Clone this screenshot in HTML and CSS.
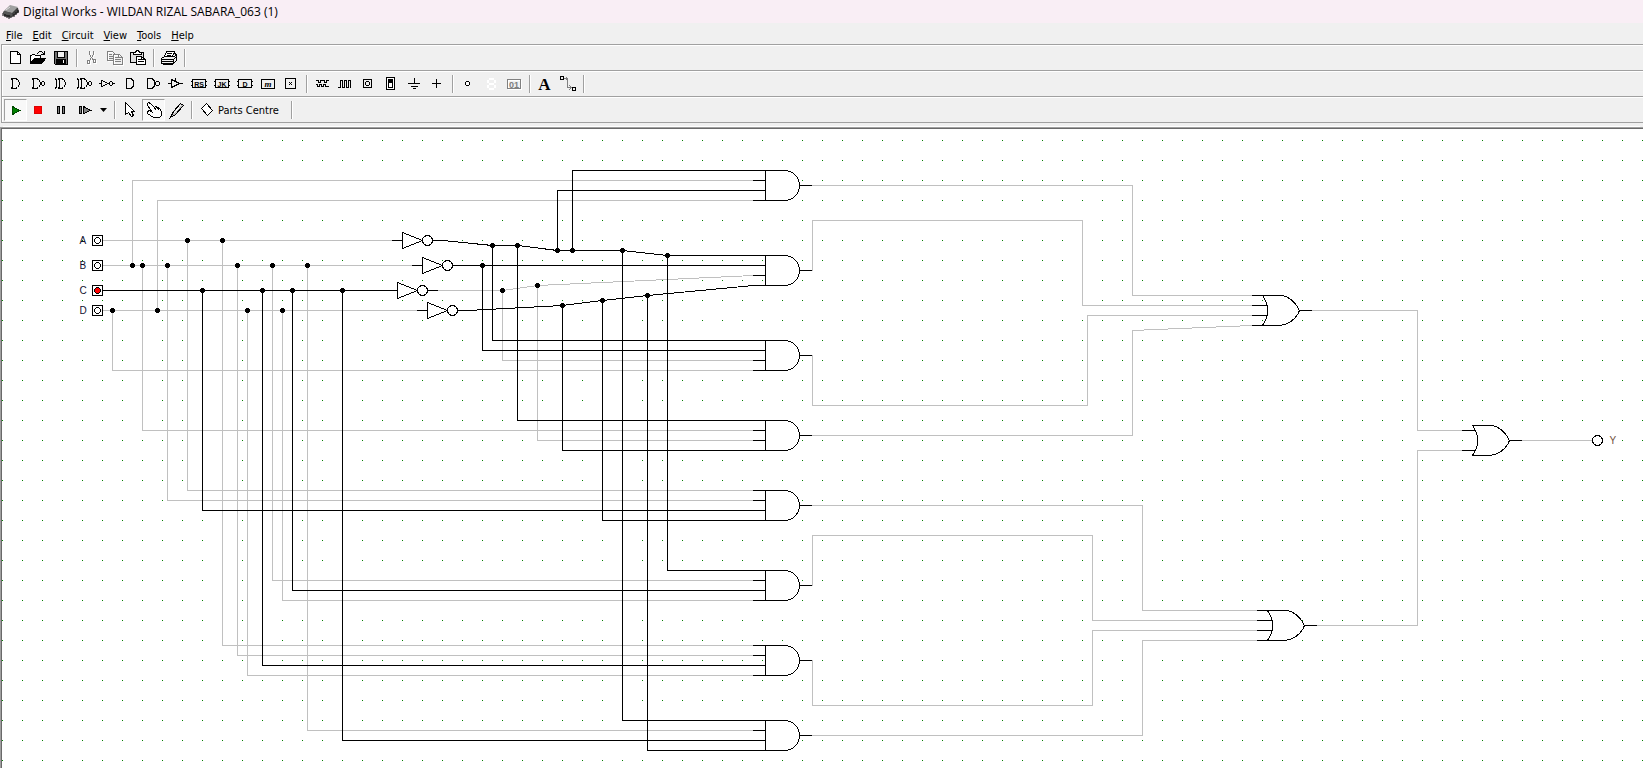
FILE: index.html
```html
<!DOCTYPE html>
<html lang="en">
<head>
<meta charset="utf-8">
<title>Digital Works</title>
<link rel="stylesheet" href="styles.css">
</head>
<body class="window">
<header class="titlebar">
  <svg class="app-icon" width="18" height="16" viewBox="0 0 18 16" aria-hidden="true">
    <path d="M1 8L8 2L16 4L17 8L9 14L2 12Z" fill="#404040"/>
    <path d="M2 7L8 1L16 3L10 9Z" fill="#a0a0a0"/>
    <path d="M2 7L10 9L10 12L2 10Z" fill="#555"/>
    <path d="M1 9v3M3 10v3M5 11v3M7 11v4M12 10v3M14 8v3M16 6v3" stroke="#111" fill="none"/>
    <path d="M4 6L8 3" stroke="#ddd"/>
  </svg>
  <h1 class="title">Digital Works - WILDAN RIZAL SABARA_063 (1)</h1>
</header>
<nav class="menubar" aria-label="Main menu">
  <button class="menu"><u>F</u>ile</button>
  <button class="menu"><u>E</u>dit</button>
  <button class="menu"><u>C</u>ircuit</button>
  <button class="menu"><u>V</u>iew</button>
  <button class="menu"><u>T</u>ools</button>
  <button class="menu"><u>H</u>elp</button>
</nav>
<div class="toolbars">
  <div class="toolbar" role="toolbar" aria-label="Standard">
    <button class="tool" aria-label="New"><svg class="icon" viewBox="-0.5 -0.5 21 20"><path class="w" d="M5 3H12L15 6V15H5Z"/><path d="M12 3V6H15"/></svg></button>
    <button class="tool" aria-label="Open"><svg class="icon" viewBox="-0.5 -0.5 21 20"><path class="w" d="M2 15V7H3L4 6H6L7 7H12V10"/><path class="k" d="M2 15L6 10H17L13 15Z"/><path d="M9 5L11 3H13L16 6M16 3V6H13"/></svg></button>
    <button class="tool" aria-label="Save"><svg class="icon" viewBox="-0.5 -0.5 21 20"><path d="M3 3H16V16H4L3 15Z" fill="#707070"/><path class="k" d="M5 11H14V16H5Z"/><path fill="#f0f0f0" d="M6 3H13V9H6Z"/><path class="white" d="M12 12V14"/></svg></button>
    <span class="sep"></span>
    <button class="tool" aria-label="Cut"><svg class="icon" viewBox="-0.5 -0.5 21 20"><g class="white" transform="translate(1 1)"><path d="M7 3V6L11 12M11 3V6L7 12M5 12H7V15H5ZM11 11H13V14H11Z"/></g><path class="gray" d="M7 3V6L11 12M11 3V6L7 12M5 12H7V15H5ZM11 11H13V14H11Z"/></svg></button>
    <button class="tool" aria-label="Copy"><svg class="icon" viewBox="-0.5 -0.5 21 20"><g class="white" transform="translate(1 1)"><path d="M8 12H2V3H7L9 5M8 16V6H14L17 9V16Z"/></g><path class="gray" d="M8 12H2V3H7L9 5M4 6H6M4 8H7M4 10H7M8 16V6H14L17 9V16ZM13 6V9H17M10 9H12M10 11H15M10 13H15"/></svg></button>
    <button class="tool" aria-label="Paste"><svg class="icon" viewBox="-0.5 -0.5 21 20"><path d="M3 4H15V14H2V4Z" fill="#ddd"/><path class="w" d="M5 6V4H7L8 2H10L11 4H13V6Z"/><path class="w" d="M8 16V8H13L17 11V16Z"/><path d="M13 8V11H17M10 11H12M10 13H15"/></svg></button>
    <span class="sep"></span>
    <button class="tool" aria-label="Print"><svg class="icon" viewBox="-0.5 -0.5 21 20"><path class="w" d="M5 8L7 3H15L13 8"/><path d="M8 5H12M8 7H11"/><path fill="#eee" d="M2 10L5 8H15L17 6V12L14 15H2Z"/><path d="M2 11H14L17 8M14 11V15M3 13H13M4 15V16H13L17 12M15 5L17 6"/></svg></button>
    <span class="sep"></span>
  </div>
  <div class="toolbar" role="toolbar" aria-label="Gates and parts">
    <button class="tool" aria-label="OR gate"><svg class="icon" viewBox="-0.5 -0.5 21 20"><path d="M6 4H10L12 5L14 8V10L12 13L10 14H6L7 12V6Z"/></svg></button>
    <button class="tool" aria-label="NOR gate"><svg class="icon" viewBox="-0.5 -0.5 21 20"><path d="M4 4H8L10 5L12 8V10L10 13L8 14H4L5 12V6ZM13 8L14 7H15L16 8V10L15 11H14L13 10Z"/></svg></button>
    <button class="tool" aria-label="XOR gate"><svg class="icon" viewBox="-0.5 -0.5 21 20"><path d="M7 4H10L12 5L14 8V10L12 13L10 14H7L8 12V6ZM4 4L5 6V12L4 14"/></svg></button>
    <button class="tool" aria-label="XNOR gate"><svg class="icon" viewBox="-0.5 -0.5 21 20"><path d="M6 4H9L11 5L13 8V10L11 13L9 14H6L7 12V6ZM3 4L4 6V12L3 14M14 8L15 7H16L17 8V10L16 11H15L14 10Z"/></svg></button>
    <button class="tool" aria-label="NOT gate"><svg class="icon" viewBox="-0.5 -0.5 21 20"><path d="M2 9H4M4 6V12L11 9ZM12 8L13 7H14L15 8V10L14 11H13L12 10ZM16 9H17"/></svg></button>
    <button class="tool" aria-label="AND gate"><svg class="icon" viewBox="-0.5 -0.5 21 20"><path d="M6 4H10L12 5L13 7V11L12 13L10 14H6Z"/></svg></button>
    <button class="tool" aria-label="NAND gate"><svg class="icon" viewBox="-0.5 -0.5 21 20"><path d="M4 4H8L10 5L11 7V11L10 13L8 14H4ZM12 8L13 7H15L16 8V10L15 11H13L12 10Z"/></svg></button>
    <button class="tool" aria-label="Tri-state buffer"><svg class="icon" viewBox="-0.5 -0.5 21 20"><path d="M2 9H5M5 5V13L13 9ZM13 9H16M9 4V7"/></svg></button>
    <button class="tool" aria-label="RS flip-flop"><svg class="icon" viewBox="-0.5 -0.5 21 20"><path d="M3 5H16V13H3ZM2 7H3M2 11H3M16 7H17M16 11H17"/><text x="9.5" y="12">RS</text></svg></button>
    <button class="tool" aria-label="JK flip-flop"><svg class="icon" viewBox="-0.5 -0.5 21 20"><path d="M3 5H16V13H3ZM2 7H3M2 11H3M16 7H17M16 11H17"/><text x="9.5" y="12">JK</text></svg></button>
    <button class="tool" aria-label="D flip-flop"><svg class="icon" viewBox="-0.5 -0.5 21 20"><path d="M3 5H16V13H3ZM2 7H3M2 11H3M16 7H17M16 11H17"/><text x="9.5" y="12">D</text></svg></button>
    <button class="tool" aria-label="Macro"><svg class="icon" viewBox="-0.5 -0.5 21 20"><path d="M3 5H16V14H3Z"/><text class="script" x="9.5" y="12">m</text></svg></button>
    <button class="tool" aria-label="Device"><svg class="icon" viewBox="-0.5 -0.5 21 20"><path d="M4 4H14V14H4Z"/><path class="k" stroke="none" d="M7.500 7.500h1v1h1v-1h1v1h-1v1h1v1h-1v-1h-1v1h-1v-1h1v-1h-1Z"/></svg></button>
    <span class="sep"></span>
    <button class="tool" aria-label="Sequence generator"><svg class="icon" viewBox="-0.5 -0.5 21 20"><path d="M4 6H6V8H8V6H12V8H14V6H16M4 10H5V12H7V10H9V12H11V10H13V12H16"/></svg></button>
    <button class="tool" aria-label="Clock"><svg class="icon" viewBox="-0.5 -0.5 21 20"><path d="M3 13H5V6H7V13H9V6H11V13H13V6H15V13"/></svg></button>
    <button class="tool" aria-label="Interactive input"><svg class="icon" viewBox="-0.5 -0.5 21 20"><path d="M5 5H13V13H5ZM8 7H10L11 8V10L10 11H8L7 10V8Z"/></svg></button>
    <button class="tool" aria-label="Switch"><svg class="icon" viewBox="-0.5 -0.5 21 20"><path class="w" d="M5 3H13V15H5Z"/><path class="k" d="M7 5H11V8H7Z"/><path d="M7 8V13H11V8"/></svg></button>
    <button class="tool" aria-label="Ground"><svg class="icon" viewBox="-0.5 -0.5 21 20"><path d="M10 4V9M4 9H15M7 12H13M9 14H11"/></svg></button>
    <button class="tool" aria-label="Supply"><svg class="icon" viewBox="-0.5 -0.5 21 20"><path d="M9 5V13M5 9H13"/></svg></button>
    <span class="sep"></span>
    <button class="tool" aria-label="Lamp"><svg class="icon" viewBox="-0.5 -0.5 21 20"><path class="w" d="M8 7H10L11 8V10L10 11H8L7 10V8Z"/></svg></button>
    <button class="tool" aria-label="Seven-segment display"><svg class="icon" viewBox="-0.5 -0.5 21 20"><path class="segments" d="M7 4H12M7 9H12M7 14H12M6 5V8M13 5V8M6 10V13M13 10V13"/></svg></button>
    <button class="tool" aria-label="Numeric output" disabled><svg class="icon" viewBox="-0.5 -0.5 21 20"><path class="white" d="M4 6H17V15H4Z"/><path class="gray" d="M3 5H16V14H3Z"/><text class="dim" x="9.5" y="13">01</text></svg></button>
    <span class="sep"></span>
    <button class="tool" aria-label="Text"><svg class="icon" viewBox="-0.5 -0.5 21 20"><text class="letter" x="9" y="15">A</text></svg></button>
    <button class="tool" aria-label="Wire"><svg class="icon" viewBox="-0.5 -0.5 21 20"><path class="gray" d="M6 4H9V13H13M8 3V5M11 11L13 13L11 15"/><path d="M2 2H5V5H2ZM14 13H17V16H14Z"/></svg></button>
    <span class="sep"></span>
  </div>
  <div class="toolbar" role="toolbar" aria-label="Simulation">
    <button class="tool pressed" aria-label="Run" aria-pressed="true"><svg class="icon" viewBox="-0.5 -0.5 21 20"><path d="M7 6L14 10L7 14Z" fill="#008000" stroke="#004800"/></svg></button>
    <button class="tool" aria-label="Stop"><svg class="icon" viewBox="-0.5 -0.5 21 20"><path d="M6 6H13V13H6Z" fill="#f00" stroke="#d00"/></svg></button>
    <button class="tool" aria-label="Pause"><svg class="icon" viewBox="-0.5 -0.5 21 20"><path d="M6 6H8V13H6ZM11 6H13V13H11Z" fill="#808080"/></svg></button>
    <button class="tool" aria-label="Step"><svg class="icon" viewBox="-0.5 -0.5 21 20"><path d="M5 6H7V13H5ZM9 6L16 10L9 13Z" fill="#808080"/></svg></button>
    <button class="tool drop" aria-label="Step options"><svg class="icon-small" viewBox="0 0 13 20"><path d="M3 8H10L6.500 12Z" fill="#000"/></svg></button>
    <span class="sep"></span>
    <button class="tool" aria-label="Select"><svg class="icon" viewBox="-0.5 -0.5 21 20"><path class="w" d="M5 2L14 11H11L13 15L11 16L8 12L5 14Z"/></svg></button>
    <button class="tool pressed" aria-label="Interact" aria-pressed="true"><svg class="icon" viewBox="-0.5 -0.5 21 20"><path class="w" d="M4 3L5 2L7 3L11 7L12 6L14 7L15 7L17 9L18 12V15L16 17H10L4 13V11L6 10L9 12L4 5Z"/><path d="M11 7L12 9M14 7L15 9"/></svg></button>
    <button class="tool" aria-label="Probe"><svg class="icon" viewBox="-0.5 -0.5 21 20"><path d="M14 3L17 5L9 14L4 17L7 11Z" fill="#c0c0c0"/><path class="white" d="M14 5L8 12"/></svg></button>
    <span class="sep"></span>
    <button class="tool wide"><svg class="icon" viewBox="-0.5 -0.5 21 20"><path class="w" d="M4 8L9 3L15 10L10 15Z"/></svg><span>Parts Centre</span></button>
    <span class="sep"></span>
  </div>
</div>
<main class="workspace">
  <svg class="circuit" role="img" aria-label="Circuit diagram with inputs A, B, C, D and output Y">
    <defs>
      <pattern id="grid" width="20" height="20" patternUnits="userSpaceOnUse"><rect x="0" y="11" width="1" height="1" fill="#008000"/></pattern>
      <path id="dot" class="k" stroke="none" d="M-1.500-2.500H1.500V-1.500H2.500V1.500H1.500V2.500H-1.500V1.500H-2.500V-1.500H-1.500Z"/>
      <g id="and">
        <path class="w" d="M12 0H31A15 15 0 0 1 31 30H12Z"/>
        <path d="M0 0H12M0 10H12M0 20H12M0 30H12M46 15H58"/>
      </g>
      <g id="or-body">
        <path class="w" d="M10 0H28C36 0 44 8 47 15C44 23 36 30 25 30H10C17 20 17 10 10 0Z"/>
        <path d="M47 15H59"/>
      </g>
      <g id="or4"><use href="#or-body"/><path d="M0 0H10M0 10H14M0 20H14M0 30H10"/></g>
      <g id="or2"><use href="#or-body"/><path d="M0 5H12M0 25H12"/></g>
      <g id="not">
        <path class="w" d="M10-8V8L30 0Z"/>
        <circle class="w" cx="35" cy="0" r="5"/>
        <path d="M0 0H10M40 0H50"/>
      </g>
      <g id="input"><path class="w" d="M-5-5H5V5H-5Z"/><path d="M-1-3H1L3-1V1L1 3H-1L-3 1V-1Z"/></g>
    </defs>
    <rect width="100%" height="100%" fill="url(#grid)"/>
    <g class="drawing" transform="translate(-1.500 -128.500)">
      <g class="low">
        <path d="M103 240H392M103 265H412M103 310H417"/>
        <path d="M132 265V180H753M157 310V200H753"/>
        <path d="M112 310V370H753M142 265V430H753M187 240V490H753M167 265V500H753"/>
        <path d="M272 265V580H753M282 310V600H753M222 240V645H753M237 265V655H753M247 310V675H753M307 265V730H753"/>
        <path d="M437 290H502L537 285L753 275M502 290V360H753M537 285V440H753"/>
        <path d="M812 185H1132V295H1252M812 270V220H1082V305H1252M812 355V405H1087V315H1252M812 435H1132V330L1252 325"/>
        <path d="M812 505H1142V610H1257M812 585V535H1092V620H1257M812 660V705H1092V630H1257M812 735H1142V640H1257"/>
        <path d="M1312 310H1417V430H1462M1317 625H1417V450H1462M1522 440H1592"/>
      </g>
      <g class="high">
        <path d="M103 290H387M202 290V510H753M292 290V590H753M262 290V665H753M342 290V740H753"/>
        <path d="M442 240L492 245H517L557 250H622L667 255H753M557 250V190H753M572 250V170H753"/>
        <path d="M492 245V340H753M517 245V420H753M622 250V720H753M667 255V570H753"/>
        <path d="M462 265H753M482 265V350H753"/>
        <path d="M467 310L562 305L602 300L647 295L753 285M562 305V450H753M602 300V520H753M647 295V750H753"/>
      </g>
      <use href="#and" x="753" y="170"/><use href="#and" x="753" y="255"/>
      <use href="#and" x="753" y="340"/><use href="#and" x="753" y="420"/>
      <use href="#and" x="753" y="490"/><use href="#and" x="753" y="570"/>
      <use href="#and" x="753" y="645"/><use href="#and" x="753" y="720"/>
      <use href="#or4" x="1252" y="295"/><use href="#or4" x="1257" y="610"/><use href="#or2" x="1462" y="425"/>
      <use href="#not" x="392" y="240"/><use href="#not" x="412" y="265"/>
      <use href="#not" x="387" y="290"/><use href="#not" x="417" y="310"/>
      <g>
        <use href="#dot" x="187" y="240"/><use href="#dot" x="222" y="240"/>
        <use href="#dot" x="132" y="265"/><use href="#dot" x="142" y="265"/><use href="#dot" x="167" y="265"/>
        <use href="#dot" x="237" y="265"/><use href="#dot" x="272" y="265"/><use href="#dot" x="307" y="265"/>
        <use href="#dot" x="202" y="290"/><use href="#dot" x="262" y="290"/><use href="#dot" x="292" y="290"/><use href="#dot" x="342" y="290"/>
        <use href="#dot" x="112" y="310"/><use href="#dot" x="157" y="310"/><use href="#dot" x="247" y="310"/><use href="#dot" x="282" y="310"/>
        <use href="#dot" x="492" y="245"/><use href="#dot" x="517" y="245"/><use href="#dot" x="557" y="250"/>
        <use href="#dot" x="572" y="250"/><use href="#dot" x="622" y="250"/><use href="#dot" x="667" y="255"/>
        <use href="#dot" x="482" y="265"/><use href="#dot" x="502" y="290"/><use href="#dot" x="537" y="285"/>
        <use href="#dot" x="562" y="305"/><use href="#dot" x="602" y="300"/><use href="#dot" x="647" y="295"/>
      </g>
      <use href="#input" x="97" y="240"/><use href="#input" x="97" y="265"/>
      <use class="on" href="#input" x="97" y="290"/><use href="#input" x="97" y="310"/>
      <circle class="w" cx="1597" cy="440" r="5"/>
      <g class="labels">
        <text x="79" y="243">A</text><text x="79" y="268">B</text>
        <text x="79" y="293">C</text><text x="79" y="313">D</text>
        <text class="out" x="1609" y="443">Y</text>
      </g>
    </g>
  </svg>
</main>
</body>
</html>
```

FILE: styles.css
```css
* { box-sizing: border-box; }

.window {
  margin: 0;
  height: 100vh;
  display: flex;
  flex-direction: column;
  overflow: hidden;
  background: #f0f0f0;
  color: #000;
  font-family: "DejaVu Sans Condensed", "DejaVu Sans", sans-serif;
  font-size: 11px;
}

.titlebar {
  display: flex;
  align-items: center;
  gap: 3px;
  height: 23px;
  padding-left: 2px;
  background: #f9eef5;
}

.title {
  margin: 0;
  font: 400 12px/16px "Open Sans", "Noto Sans", sans-serif;
}

.menubar {
  display: flex;
  height: 21px;
}

.menu {
  padding: 3px 5px 0;
  border: 0;
  background: none;
  font: inherit;
  color: inherit;
}

.menu:first-child { padding-left: 6px; }

.toolbars {
  margin-left: 1px;
  border-left: 1px solid #a0a0a0;
  border-bottom: 1px solid #a0a0a0;
}

.toolbar {
  display: flex;
  align-items: center;
  height: 26px;
  padding-left: 2px;
  border-top: 1px solid #a0a0a0;
  box-shadow: inset 1px 1px 0 #fff;
  padding-top: 1px;
}

.tool {
  display: flex;
  align-items: center;
  width: 23px;
  height: 22px;
  padding: 0;
  border: 1px solid transparent;
  background: none;
  font: inherit;
  color: inherit;
}

.tool.pressed {
  border-color: #a0a0a0 #fff #fff #a0a0a0;
  background: #f8f8f8;
}

.tool.drop { width: 15px; }
.tool.wide { width: 92px; white-space: nowrap; }

.icon {
  flex: none;
  width: 21px;
  height: 20px;
}

.icon-small {
  flex: none;
  width: 13px;
  height: 20px;
}

.icon, .drawing {
  fill: none;
  stroke: #000;
  stroke-width: 1px;
  stroke-linecap: square;
  shape-rendering: crispEdges;
}

.icon text {
  fill: #000;
  stroke: none;
  font: 700 7px "Liberation Sans", sans-serif;
  text-anchor: middle;
}

.icon .script { font: italic 700 9px "Liberation Serif", serif; }
.icon .letter { font: 700 17px "Liberation Serif", serif; }
.icon .dim { fill: #808080; font-size: 9px; }

.w { fill: #fff; }
.k { fill: #000; }
.gray { stroke: #808080; }
.white { stroke: #fff; }
.segments { stroke: #fff; stroke-width: 2px; stroke-linecap: butt; }

.sep {
  width: 8px;
  height: 18px;
  background: linear-gradient(90deg, transparent 3px, #a0a0a0 3px 4px, #fff 4px 5px, transparent 5px);
}

.workspace {
  flex: 1;
  min-height: 0;
  margin-top: 4px;
  border-top: 1px solid #a0a0a0;
  border-left: 1px solid #a0a0a0;
  background: #fff;
  box-shadow: 0 -4px 0 -3px #fff;
}

.circuit {
  display: block;
  width: 100%;
  height: 100%;
  border-top: 1px solid #696969;
  border-left: 1px solid #696969;
}

.low { stroke: #c0c0c0; }
.high { stroke: #000; }
.on { fill: #f00; }

.labels {
  fill: #101030;
  stroke: none;
  font: 400 10px "Liberation Sans", sans-serif;
}

.out { fill: #705040; }
```
